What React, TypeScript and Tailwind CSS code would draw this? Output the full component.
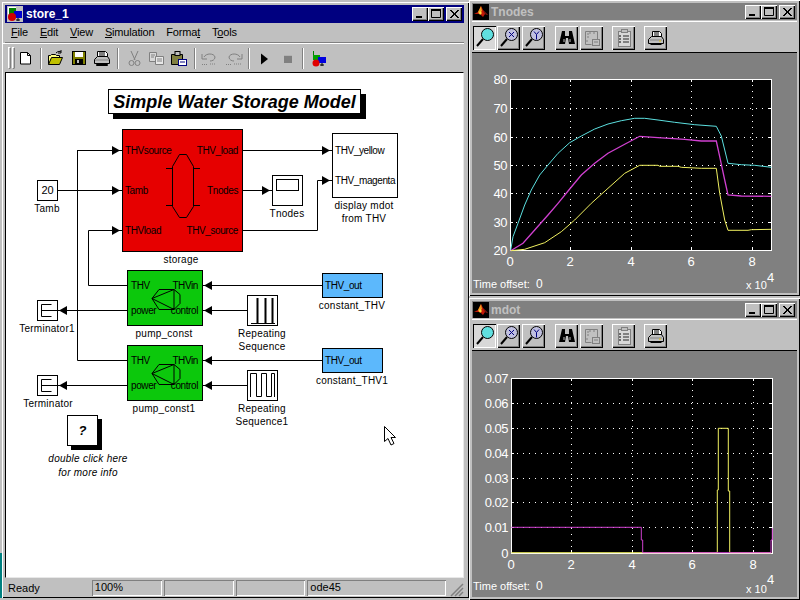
import React from "react";

const S = { fontFamily: '"Liberation Sans", Arial, sans-serif' };

function CapBtns() {
  const cls = "w-[16px] h-[14px] bg-[#c0c0c0] shadow-[inset_1px_1px_0_#ffffff,inset_-1px_-1px_0_#000000,inset_-2px_-2px_0_#808080] flex items-center justify-center";
  return (
    <div className="flex items-center">
      <div className={cls}>
        <svg width="16" height="14"><rect x="4" y="9" width="6" height="2" fill="#000" /></svg>
      </div>
      <div className={cls}>
        <svg width="16" height="14"><path d="M3.5 3.5h9v7h-9z" fill="none" stroke="#000" /><rect x="3" y="2" width="10" height="2" fill="#000" /></svg>
      </div>
      <div className={`${cls} ml-[2px]`}>
        <svg width="16" height="14"><path d="M4 3l8 8M5 3l8 8M12 3l-8 8M13 3l-8 8" stroke="#000" strokeWidth="1" /></svg>
      </div>
    </div>
  );
}

function MatlabLogo() {
  return (
    <svg width="16" height="16" viewBox="0 0 16 16">
      <rect width="16" height="16" fill="#000" />
      <path d="M1 10l4-2 3-6 2 4 5 5-3-1-2 3-3-3z" fill="#c01808" />
      <path d="M5 8l3-6 1 5-3 3z" fill="#f0a020" />
      <path d="M7 7l2 2-2 2-1-2z" fill="#ffe040" />
      <path d="M10 6l5 5-3-1z" fill="#601010" />
    </svg>
  );
}

function SimIcon() {
  return (
    <svg width="16" height="16" viewBox="0 0 16 16">
      <rect x="0" y="0" width="16" height="16" fill="#c0c0c0" />
      <rect x="1" y="1" width="8" height="7" fill="#008000" />
      <path d="M1 1h8v1H2v6H1z" fill="#fff" />
      <rect x="7" y="5" width="8" height="7" fill="#0000d0" />
      <circle cx="5" cy="11" r="4" fill="#d00000" />
      <path d="M11 12v3M9 14h4" stroke="#000" />
    </svg>
  );
}

function MainTool() {
  const Sep = ({ x }: { x: number }) => (
    <>
      <line x1={x + 0.5} y1="4" x2={x + 0.5} y2="25" stroke="#808080" />
      <line x1={x + 1.5} y1="4" x2={x + 1.5} y2="25" stroke="#fff" />
    </>
  );
  return (
    <svg width="330" height="28" className="block" viewBox="3 44 330 28">
      <g transform="translate(0,44)">
        <rect x="9.5" y="3.5" width="2" height="21" fill="#c0c0c0" stroke="#fff" />
        <path d="M11.5 3.5v21h-2" stroke="#808080" fill="none" />
        <rect x="13.5" y="3.5" width="2" height="21" fill="#c0c0c0" stroke="#fff" />
        <path d="M15.5 3.5v21h-2" stroke="#808080" fill="none" />
        <Sep x={41} /><Sep x={118} /><Sep x={195} /><Sep x={249} /><Sep x={303} />
      </g>
      <path d="M21.5 52.5h7l3 3v8.5h-10z" fill="#fff" stroke="#000" />
      <path d="M28.5 52.5v3h3" fill="none" stroke="#000" />
      <path d="M49.5 64.5v-9h2l1-1h4l1 1h3v2" fill="#ffff80" stroke="#000" />
      <path d="M49.5 64.5l3-7h11l-3 7z" fill="#c0c000" stroke="#000" />
      <path d="M57 53c2-2 4-2 5-1M62 50v3h-3" fill="none" stroke="#000" />
      <rect x="73.5" y="51.5" width="13" height="13" fill="#808000" stroke="#000" />
      <rect x="76" y="52" width="8" height="5" fill="#fff" />
      <rect x="76" y="59" width="8" height="5" fill="#000" />
      <rect x="78" y="60" width="2" height="3" fill="#c0c0c0" />
      <path d="M98.5 51.5h8l2 2v4h-10z" fill="#fff" stroke="#000" />
      <path d="M100 53h6M100 55h6" stroke="#000" />
      <path d="M95.5 59.5l3-3h10l2 3v4h-15z" fill="#c0c0c0" stroke="#000" />
      <path d="M97.5 64.5h11v1h-11z" fill="#808080" stroke="#000" />
      <path d="M96 60h14" stroke="#808080" />
      <path d="M132 51l4 9M139 51l-4 9" stroke="#808080" fill="none" />
      <circle cx="132.5" cy="63" r="2.5" fill="none" stroke="#808080" />
      <circle cx="138.5" cy="63" r="2.5" fill="none" stroke="#808080" />
      <path d="M150.5 52.5h7v9h-7z" fill="#d8d8d8" stroke="#808080" />
      <path d="M156.5 56.5h8v8h-8z" fill="#e8e8e8" stroke="#808080" />
      <path d="M152 55h4M152 57h3M158 59h5M158 61h5" stroke="#808080" />
      <path d="M172.5 54.5h11v10h-11z" fill="#808040" stroke="#000" />
      <rect x="176" y="51.5" width="5" height="4" fill="#c0c0c0" stroke="#000" />
      <rect x="179.5" y="59.5" width="8" height="6" fill="#fff" stroke="#000080" />
      <path d="M181 62h5" stroke="#000080" />
      <path d="M205 57c2-4 10-4 11 0 0 3-3 4-5 4" fill="none" stroke="#808080" />
      <path d="M203 54v5h5" fill="none" stroke="#808080" />
      <path d="M203 64.5h6M211 64h6" stroke="#808080" strokeDasharray="1 1" />
      <path d="M241 57c-2-4-10-4-11 0 0 3 3 4 5 4" fill="none" stroke="#808080" />
      <path d="M243 54v5h-5" fill="none" stroke="#808080" />
      <path d="M227 64.5h6M235 64h8" stroke="#808080" strokeDasharray="1 1" />
      <path d="M262 53.5l7 5.5-7 5.5z" fill="#000" />
      <rect x="285" y="55" width="8" height="8" fill="#808080" />
      <path d="M285 55h8v1h-8z" fill="#fff" opacity=".4" />
      <rect x="314" y="51" width="1" height="5" fill="#008000" />
      <rect x="314" y="55" width="7" height="5" fill="#00a000" />
      <rect x="319" y="57" width="8" height="6" fill="#0000e0" />
      <circle cx="317" cy="63" r="3.5" fill="#e00000" />
      <path d="M323 63v3M321 65h4" stroke="#000" />
    </svg>
  );
}

function Btn({ x, pressed, children }: { x: number; pressed?: boolean; children: React.ReactNode }) {
  return (
    <div
      style={{ marginLeft: x }}
      className={`w-[23px] h-[24px] flex items-center justify-center shrink-0 ${
        pressed
          ? "bg-[#d8d8d8] shadow-[inset_1px_1px_0_#000000,inset_-1px_-1px_0_#ffffff]"
          : "bg-[#c0c0c0] shadow-[inset_1px_1px_0_#ffffff,inset_-1px_-1px_0_#000000,inset_-2px_-2px_0_#808080]"
      }`}
    >
      {children}
    </div>
  );
}

function Glass({ mark }: { mark?: "x" | "y" }) {
  return (
    <svg width="20" height="20" viewBox="0 0 20 20">
      <path d="M2 18l6-7" stroke="#000" strokeWidth="2" />
      <circle cx="12.5" cy="6.5" r="6" fill={mark ? "#c0c0e0" : "#60e0e0"} stroke="#000" />
      {mark === "x" && <path d="M10 4l5 5M15 4l-5 5" stroke="#000080" />}
      {mark === "y" && <path d="M10 3.5l2.5 3 2.5-3M12.5 6.5v5" stroke="#000080" fill="none" />}
    </svg>
  );
}

function PlotToolbar() {
  return (
    <div className="h-[32px] pt-[2px] bg-[#c0c0c0] border-t border-t-white border-b border-b-black flex items-center shrink-0">
      <Btn x={1} pressed><Glass /></Btn>
      <Btn x={1}><Glass mark="x" /></Btn>
      <Btn x={2}><Glass mark="y" /></Btn>
      <Btn x={10}>
        <svg width="18" height="16" viewBox="0 0 18 16">
          <path d="M4 1h3v5h4V1h3l3 13h-6l-1-6H8l-1 6H1z" fill="#000" />
          <path d="M6 9v3M12 9v3" stroke="#c0c0c0" />
        </svg>
      </Btn>
      <Btn x={2}>
        <svg width="18" height="18" viewBox="0 0 18 18">
          <path d="M2.5 2.5h12v8M2.5 2.5v13h6" fill="none" stroke="#808080" />
          <path d="M2 12h3M4 8h2M4 5h2M7 3v2M11 3v2" stroke="#808080" />
          <rect x="9.5" y="10.5" width="7" height="6" fill="#c0c0c0" stroke="#808080" />
          <path d="M11 13h4" stroke="#808080" />
        </svg>
      </Btn>
      <Btn x={9}>
        <svg width="16" height="20" viewBox="0 0 16 20">
          <rect x="2.5" y="3.5" width="12" height="15" fill="#d8d8d8" stroke="#808080" />
          <rect x="5.5" y="1.5" width="6" height="3" fill="#c0c0c0" stroke="#808080" />
          <path d="M7 8h6M7 11h6M7 14h6" stroke="#808080" strokeWidth="2" />
          <path d="M3 8h2M3 11h2M3 14h2" stroke="#000" />
        </svg>
      </Btn>
      <Btn x={9}>
        <svg width="18" height="16" viewBox="0 0 18 16">
          <path d="M5.5 1.5h7l2 2v4h-9z" fill="#fff" stroke="#000" />
          <path d="M7 3h5M7 5h5" stroke="#000" />
          <path d="M1.5 9.5l3-3h10l2 3v4h-15z" fill="#c0c0c0" stroke="#000" />
          <path d="M3.5 14.5h11" stroke="#000" />
          <path d="M3 10h12" stroke="#808080" />
          <path d="M12 11h2" stroke="#e0c000" />
        </svg>
      </Btn>
    </div>
  );
}

type Pt = [number, number];
const pl = (pts: Pt[], ox: number, oy: number) =>
  pts.map(([x, y]) => `${(ox + x / 3).toFixed(1)},${(oy + y / 3).toFixed(1)}`).join(" ");

const cyan: Pt[] = [[128,570],[135,530],[150,490],[170,435],[190,390],[215,345],[240,315],[270,280],[305,248],[340,228],[380,207],[420,192],[460,182],[500,175],[530,175],[570,180],[620,187],[680,194],[745,199],[760,228],[780,310],[820,314],[860,316],[910,322]];
const magenta: Pt[] = [[128,572],[165,550],[200,510],[240,465],[270,430],[305,387],[340,345],[380,310],[420,280],[470,253],[515,229],[570,233],[650,238],[700,243],[745,243],[755,290],[770,360],[780,405],[820,408],[910,409]];
const yellow: Pt[] = [[128,572],[170,568],[230,548],[280,515],[320,480],[370,430],[420,385],[470,340],[515,316],[570,316],[575,319],[630,319],[640,322],[700,325],[745,325],[755,400],[770,480],[780,511],[840,511],[850,509],[910,508]];
const myellow: Pt[] = [[130,773],[748,773],[748,585],[751,585],[751,400],[781,400],[781,588],[785,588],[785,773],[910,773]];
const mmagenta: Pt[] = [[130,697],[520,697],[520,735],[524,735],[524,773],[909,773],[909,735],[913,735],[913,700]];

function Plot({
  ax, ay, aw, ah, xt, yt, yl, xl, children, lblY, h, expDy, baseDy,
}: {
  ax: number; ay: number; aw: number; ah: number; xt: number[]; yt: number[]; yl: string[]; xl: string[]; children: React.ReactNode; lblY: number; h: number; expDy: number; baseDy: number;
}) {
  return (
    <svg width="330" height={h} className="block" style={S}>
      <rect x={ax + 0.5} y={ay + 0.5} width={aw} height={ah} fill="#000" stroke="#fff" />
      {xt.map((x) => (
        <g key={x}>
          <line x1={x + 0.5} y1={ay} x2={x + 0.5} y2={ay + ah} stroke="#fff" strokeDasharray="1 5" />
          <line x1={x + 0.5} y1={ay} x2={x + 0.5} y2={ay + 3} stroke="#fff" />
          <line x1={x + 0.5} y1={ay + ah - 3} x2={x + 0.5} y2={ay + ah} stroke="#fff" />
        </g>
      ))}
      {yt.map((y, i) =>
        i === 0 || i === yt.length - 1 ? null : (
          <g key={y}>
            <line x1={ax} y1={y + 0.5} x2={ax + aw} y2={y + 0.5} stroke="#fff" strokeDasharray="1 5" />
            <line x1={ax} y1={y + 0.5} x2={ax + 3} y2={y + 0.5} stroke="#fff" />
            <line x1={ax + aw - 3} y1={y + 0.5} x2={ax + aw} y2={y + 0.5} stroke="#fff" />
          </g>
        ),
      )}
      {yt.map((y, i) => (
        <text key={i} x={ax - 3} y={y + 5} textAnchor="end" fontSize="13" letterSpacing="-0.5" fill="#fff">{yl[i]}</text>
      ))}
      {[ax, ...xt].map((x, i) => (
        <text key={i} x={x} y={ay + ah + 16} textAnchor="middle" fontSize="13" fill="#fff">{xl[i]}</text>
      ))}
      {children}
      <text x="1" y={lblY} fontSize="11" fill="#fff">Time offset:</text>
      <text x="64" y={lblY} fontSize="12" fill="#fff">0</text>
      <text x="274" y={lblY + baseDy} fontSize="11" fill="#fff">x 10</text>
      <text x="295" y={lblY + expDy} fontSize="13" fill="#fff">4</text>
    </svg>
  );
}

function FigWindow({ title, top, height, children }: { title: string; top: number; height: number; children: React.ReactNode }) {
  return (
    <div
      style={{ top, height, ...S }}
      className="absolute left-[469px] w-[331px] bg-[#c0c0c0] shadow-[inset_1px_1px_0_#ffffff,inset_-1px_-1px_0_#000000] p-[3px] flex flex-col"
    >
      <div className="h-[17px] bg-[#808080] flex items-center justify-between shrink-0 pl-[1px] pr-[2px]">
        <div className="flex items-center gap-[2px]">
          <MatlabLogo />
          <span className="text-[12px] font-bold text-[#c0c0c0] leading-none">{title}</span>
        </div>
        <CapBtns />
      </div>
      <div className="h-[1px] shrink-0" />
      <PlotToolbar />
      <div className="flex-1 bg-[#808080] overflow-hidden">{children}</div>
    </div>
  );
}

function Port({ children, cls }: { children: React.ReactNode; cls: string }) {
  return <span className={`absolute text-[10px] tracking-[-0.4px] leading-[11px] whitespace-nowrap ${cls}`}>{children}</span>;
}

function Cap({ x, y, children, italic }: { x: number; y: number; children: React.ReactNode; italic?: boolean }) {
  return (
    <span
      style={{ left: x - 6, top: y - 73 - 6 }}
      className={`absolute -translate-x-1/2 text-[10px] leading-[12px] tracking-[0.25px] text-black whitespace-nowrap ${italic ? "italic" : ""}`}
    >
      {children}
    </span>
  );
}

/* positions are page coordinates minus the canvas origin (6,73) */
function Block({ x, y, w, h, cls, children }: { x: number; y: number; w: number; h: number; cls?: string; children?: React.ReactNode }) {
  return (
    <div style={{ left: x - 6, top: y - 73, width: w, height: h }} className={`absolute border border-black text-black ${cls ?? "bg-white"}`}>
      {children}
    </div>
  );
}

function Pump({ y }: { y: number }) {
  return (
    <Block x={127} y={y} w={76} h={56} cls="bg-[#0cc80c]">
      <Port cls="left-[3px] top-[9px]">THV</Port>
      <Port cls="left-[3px] top-[34px]">power</Port>
      <Port cls="right-[4px] top-[9px]">THVin</Port>
      <Port cls="right-[4px] top-[34px]">control</Port>
      <svg width="32" height="24" className="absolute left-[23px] top-[17px]">
        <path d="M1 10.5L8 1.5h15l6 5v9l-6 6H8z" fill="none" stroke="#000" />
        <path d="M1 10.5L23 1.5v20z" fill="none" stroke="#000" />
      </svg>
    </Block>
  );
}

function Canvas() {
  const tri = (x: number, y: number, dir: 1 | -1) =>
    dir === 1 ? `${x - 8},${y - 4.5} ${x},${y} ${x - 8},${y + 4.5}` : `${x + 8},${y - 4.5} ${x},${y} ${x + 8},${y + 4.5}`;
  const arrows: [number, number, 1 | -1][] = [
    [122, 150, 1], [122, 190, 1], [122, 230, 1], [332, 150, 1], [272, 190, 1], [332, 180, 1],
    [204, 285, -1], [204, 310, -1], [204, 360, -1], [204, 385, -1], [59, 310, -1], [59, 385, -1],
  ];
  return (
    <div className="relative flex-1 bg-white border-t border-l border-t-black border-l-black border-r border-b border-r-[#e8e8e8] border-b-[#e8e8e8] overflow-hidden">
      <svg width="458" height="504" viewBox="6 73 458 504" className="absolute left-0 top-0">
        <g fill="none" stroke="#000">
          <path d="M77 150.5H122 M77.5 150V360.5H127" />
          <path d="M58 190.5H122" />
          <path d="M122 230.5H88.5V285.5H127" />
          <path d="M242 150.5H332" />
          <path d="M242 190.5H272" />
          <path d="M242 230.5H317.5V180.5H332" />
          <path d="M202 285.5H322 M202 360.5H322" />
          <path d="M202 310.5H247 M202 385.5H247" />
          <path d="M58 310.5H127 M58 385.5H127" />
        </g>
        {arrows.map(([x, y, d], i) => (
          <polygon key={i} points={tri(d === 1 ? x - 2 : x, y + 0.5, d)} fill="#000" />
        ))}
      </svg>

      <div style={{ left: 102, top: 16 }} className="absolute w-[253px] h-[25px] bg-white border border-black shadow-[5px_5px_0_#000] flex items-center justify-center">
        <span className="text-[18px] font-bold italic leading-none text-black whitespace-nowrap">Simple Water Storage Model</span>
      </div>

      <Block x={122} y={129} w={121} h={123} cls="bg-[#e60000]">
        <Port cls="left-[2px] top-[15px]">THVsource</Port>
        <Port cls="left-[2px] top-[55px]">Tamb</Port>
        <Port cls="left-[2px] top-[95px]">THVload</Port>
        <Port cls="right-[4px] top-[15px]">THV_load</Port>
        <Port cls="right-[4px] top-[55px]">Tnodes</Port>
        <Port cls="right-[4px] top-[95px]">THV_source</Port>
        <svg width="36" height="66" className="absolute left-[42px] top-[23px]">
          <path d="M7.5 13.5L14.5 1.5H21.5L28.5 13.5V53.5L21.5 64.5H14.5L7.5 53.5Z" fill="none" stroke="#000" />
          <path d="M1 15.5H7 M29 15.5H35 M1 52.5H7 M29 52.5H35" stroke="#000" />
        </svg>
      </Block>
      <Cap x={181} y={260}>storage</Cap>

      <Block x={37} y={180} w={21} h={21}>
        <span className="absolute inset-0 flex items-center justify-center text-[11px]">20</span>
      </Block>
      <Cap x={47} y={209}>Tamb</Cap>

      <Block x={272} y={175} w={31} h={31}>
        <div className="absolute left-[3px] top-[3px] w-[23px] h-[12px] border border-black" />
      </Block>
      <Cap x={287} y={214}>Tnodes</Cap>

      <Block x={332} y={133} w={66} h={65}>
        <Port cls="left-[2px] top-[11px]">THV_yellow</Port>
        <Port cls="left-[2px] top-[41px]">THV_magenta</Port>
      </Block>
      <Cap x={364} y={206}>display mdot</Cap>
      <Cap x={364} y={219}>from THV</Cap>

      <Pump y={270} />
      <Cap x={164} y={334}>pump_const</Cap>
      <Pump y={345} />
      <Cap x={164} y={409}>pump_const1</Cap>

      <Block x={322} y={273} w={61} h={25} cls="bg-[#5cb8fc]">
        <Port cls="left-[2px] top-[6px]">THV_out</Port>
      </Block>
      <Cap x={352} y={306}>constant_THV</Cap>
      <Block x={322} y={348} w={61} h={25} cls="bg-[#5cb8fc]">
        <Port cls="left-[2px] top-[6px]">THV_out</Port>
      </Block>
      <Cap x={352} y={381}>constant_THV1</Cap>

      <Block x={247} y={295} w={31} h={31}>
        <svg width="29" height="29" className="absolute left-0 top-0">
          <path d="M3 27.5H27" stroke="#000" />
          <path d="M9.5 2V28 M17.5 2V28 M24.5 2V28" stroke="#000" strokeWidth="2" />
        </svg>
      </Block>
      <Cap x={262} y={334}>Repeating</Cap>
      <Cap x={262} y={347}>Sequence</Cap>
      <Block x={247} y={370} w={31} h={31}>
        <svg width="29" height="29" className="absolute left-0 top-0">
          <path d="M2.5 26V2.5H8.5V25.5H13.5V2.5H18.5V25.5H23.5V2.5H26.5V26" fill="none" stroke="#000" />
        </svg>
      </Block>
      <Cap x={262} y={409}>Repeating</Cap>
      <Cap x={262} y={422}>Sequence1</Cap>

      {[300, 375].map((y) => (
        <Block key={y} x={37} y={y} w={21} h={21}>
          <svg width="19" height="19" className="absolute left-0 top-0">
            <path d="M3.5 3.5V15.5 M3.5 3.5H13.5 M3.5 9.5H19 M3.5 15.5H13.5" stroke="#000" fill="none" />
          </svg>
        </Block>
      ))}
      <Cap x={47} y={329}>Terminator1</Cap>
      <Cap x={48} y={404}>Terminator</Cap>

      <div style={{ left: 61, top: 342 }} className="absolute w-[31px] h-[31px] bg-white border border-black shadow-[4px_4px_0_#000] flex items-center justify-center">
        <span className="text-[13px] font-bold italic text-black leading-none">?</span>
      </div>
      <Cap x={88} y={459} italic>double click here</Cap>
      <Cap x={88} y={473} italic>for more info</Cap>

      <svg width="14" height="20" className="absolute left-[378px] top-[353px]" viewBox="0 0 14 20">
        <path d="M0.5 0.5V15.5L4 12.5L7 19L10 17.5L7 11.5H11.5Z" fill="#fff" stroke="#000" />
      </svg>
    </div>
  );
}

export default function App() {
  return (
    <div style={S} className="relative w-[800px] h-[600px] overflow-hidden bg-[#c0c0c0]">
      <div className="absolute left-0 top-[553px] w-[2px] h-[45px] bg-[#008080]" />

      {/* Model window */}
      <div className="absolute left-[2px] top-[2px] w-[467px] h-[596px] bg-[#c0c0c0] border-t border-l border-t-white border-l-white flex flex-col pl-[2px] pr-[5px] pt-[2px] shadow-[inset_-1px_-1px_0_#000000]">
        <div className="h-[18px] bg-[#000080] flex items-center justify-between shrink-0 pl-[2px] pr-[2px]">
          <div className="flex items-center gap-[3px]">
            <SimIcon />
            <span className="text-[12px] font-bold text-white leading-none">store_1</span>
          </div>
          <CapBtns />
        </div>
        <div className="h-[20px] flex items-center gap-[12px] shrink-0 pl-[6px] text-[11px] tracking-[-0.2px] text-black border-b border-b-[#808080]">
          <span><u>F</u>ile</span>
          <span><u>E</u>dit</span>
          <span><u>V</u>iew</span>
          <span><u>S</u>imulation</span>
          <span>Forma<u>t</u></span>
          <span>T<u>o</u>ols</span>
        </div>
        <div className="h-[29px] shrink-0 border-t border-t-white -ml-[3px] overflow-hidden">
          <MainTool />
        </div>
        <Canvas />
        <div className="h-[20px] shrink-0 flex items-center text-[11px] text-black">
          <span className="w-[87px] pl-[3px]">Ready</span>
          <span className="w-[70px] h-[16px] pl-[3px] leading-[15px] shadow-[inset_1px_1px_0_#808080,inset_-1px_-1px_0_#ffffff]">100%</span>
          <span className="w-[70px] h-[16px] ml-[2px] shadow-[inset_1px_1px_0_#808080,inset_-1px_-1px_0_#ffffff]" />
          <span className="w-[70px] h-[16px] ml-[2px] shadow-[inset_1px_1px_0_#808080,inset_-1px_-1px_0_#ffffff]" />
          <span className="w-[139px] h-[16px] ml-[2px] pl-[3px] leading-[15px] shadow-[inset_1px_1px_0_#808080,inset_-1px_-1px_0_#ffffff]">ode45</span>
          <svg width="14" height="14" className="ml-[4px] mt-[3px]">
            <path d="M1 13L13 1M5 13L13 5M9 13L13 9" stroke="#808080" strokeWidth="1.5" />
          </svg>
        </div>
      </div>

      {/* Tnodes */}
      <FigWindow title="Tnodes" top={0} height={296}>
        <Plot ax={38} ay={26} aw={261} ah={171} xt={[98, 159, 219, 280]} yt={[197, 169, 140, 112, 84, 55, 26]}
          yl={["20","30","40","50","60","70","80"]} xl={["0","2","4","6","8"]} lblY={235} h={240} baseDy={1} expDy={-6}>
          <polyline points={pl(cyan, -4, 7)} fill="none" stroke="#5ce0e0" strokeWidth="1" />
          <polyline points={pl(magenta, -4, 7)} fill="none" stroke="#d040d0" strokeWidth="1.3" />
          <polyline points={pl(yellow, -4, 7)} fill="none" stroke="#f0f060" strokeWidth="1" />
        </Plot>
      </FigWindow>

      {/* mdot */}
      <FigWindow title="mdot" top={298} height={302}>
        <Plot ax={39} ay={27} aw={261} ah={175} xt={[99, 160, 220, 281]} yt={[202, 176, 151, 127, 102, 77, 52, 27]}
          yl={["0","0.01","0.02","0.03","0.04","0.05","0.06","0.07"]} xl={["0","2","4","6","8"]} lblY={239} h={246} baseDy={3} expDy={-6}>
          <polyline points={pl(myellow, -4, -56)} fill="none" stroke="#f0f060" strokeWidth="1" />
          <polyline points={pl(mmagenta, -4, -56)} fill="none" stroke="#d040d0" strokeWidth="1" />
        </Plot>
      </FigWindow>
    </div>
  );
}
